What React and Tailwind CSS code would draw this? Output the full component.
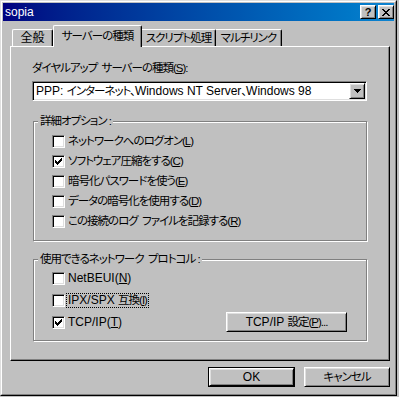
import React from "react";

const raised =
  "border border-t-white border-l-white border-r-black border-b-black shadow-[inset_1px_1px_#dfdfdf,inset_-1px_-1px_#808080]";
const sunken =
  "border border-t-[#808080] border-l-[#808080] border-r-white border-b-white shadow-[inset_1px_1px_#000,inset_-1px_-1px_#dfdfdf]";

function J({ children }) {
  return <span className="text-[11.5px] tracking-[-1px]">{children}</span>;
}

function CheckMark() {
  const px = [
    [6, 0, 1], [5, 1, 2], [0, 2, 1], [4, 2, 3], [0, 3, 2], [3, 3, 3], [0, 4, 5], [1, 5, 3], [2, 6, 1],
  ];
  return (
    <svg width="7" height="7" viewBox="0 0 7 7" shapeRendering="crispEdges">
      {px.map(([x, y, w], i) => (
        <rect key={i} x={x} y={y} width={w} height={1} fill="#000" />
      ))}
    </svg>
  );
}

function Box({ checked }) {
  return (
    <span className={`w-[13px] h-[13px] shrink-0 bg-white flex items-center justify-center ${sunken}`}>
      {checked && <CheckMark />}
    </span>
  );
}

function Row({ checked, children, h = "h-[20px]", focus = false, right = null }) {
  return (
    <div className={`${h} flex items-center`}>
      <Box checked={checked} />
      <span
        className={`ml-[2px] leading-[13px] px-px whitespace-pre ${
          focus ? "outline outline-1 outline-dotted outline-black" : ""
        }`}
      >
        {children}
      </span>
      {right}
    </div>
  );
}

function Group({ title, className = "", children }) {
  return (
    <fieldset
      className={`ml-px w-[334px] border border-[#808080] shadow-[inset_1px_1px_#fff,1px_1px_#fff] ${className}`}
    >
      <legend className="ml-[4px] px-[2px] leading-[14px] bg-[#c0c0c0] whitespace-pre">
        <J>{title}</J>
      </legend>
      {children}
    </fieldset>
  );
}

const tabBase = "flex items-center justify-center leading-[14px] whitespace-nowrap";

export default function App() {
  return (
    <div className="w-[399px] h-[397px] bg-[#c0c0c0] text-black text-[12px] font-['Liberation_Sans','Noto_Sans_CJK_JP',sans-serif] [font-feature-settings:'palt']">
      <div className="w-[397px] h-[396px] border border-t-[#dfdfdf] border-l-[#dfdfdf] border-r-black border-b-black">
        <div className="w-full h-full border border-t-white border-l-white border-r-[#808080] border-b-[#808080] p-px flex flex-col">
          {/* Title bar */}
          <div className="h-[18px] shrink-0 flex items-center bg-gradient-to-r from-[#000080] to-[#1084d0] pl-[2px] gap-[2px]">
            <span className="flex-1 text-white text-[12px] leading-[14px]">sopia</span>
            <div className={`w-[16px] h-[14px] flex items-center justify-center bg-[#c0c0c0] ${raised}`}>
              <span className="font-bold text-[11px] leading-[10px]">?</span>
            </div>
            <div className={`w-[16px] h-[14px] flex items-center justify-center bg-[#c0c0c0] ${raised}`}>
              <svg width="8" height="7" viewBox="0 0 8 7" shapeRendering="crispEdges">
                <path
                  d="M0 0h2v1h-2zM6 0h2v1h-2zM1 1h2v1h-2zM5 1h2v1h-2zM2 2h4v1h-4zM3 3h2v1h-2zM2 4h4v1h-4zM1 5h2v1h-2zM5 5h2v1h-2zM0 6h2v1h-2zM6 6h2v1h-2z"
                  fill="#000"
                />
              </svg>
            </div>
          </div>

          {/* Tabs */}
          <div className="mt-[4px] h-[21px] shrink-0 flex items-end pl-[9px]">
            <div className={`w-[41px] h-[17px] border-t border-l border-white border-r border-r-black rounded-tl-[2px] rounded-tr-[2px] shadow-[inset_-1px_0_#808080] ${tabBase}`}>
              <span className="text-[12px]">全般</span>
            </div>
            <div className={`relative w-[89px] h-[22px] -mb-px pb-[1px] bg-[#c0c0c0] border-t border-l border-white border-r border-r-black rounded-tl-[2px] rounded-tr-[2px] shadow-[inset_-1px_0_#808080] ${tabBase}`}>
              <J>サーバーの種類</J>
            </div>
            <div className={`w-[74px] h-[17px] border-t border-white border-r border-r-black rounded-tr-[2px] shadow-[inset_-1px_0_#808080] ${tabBase}`}>
              <J>スクリプト処理</J>
            </div>
            <div className={`w-[66px] h-[17px] border-t border-white border-r border-r-black rounded-tr-[2px] shadow-[inset_-1px_0_#808080] ${tabBase}`}>
              <J>マルチリンク</J>
            </div>
          </div>

          {/* Panel */}
          <div className="ml-[7px] w-[380px] h-[315px] shrink-0 border border-t-white border-l-white border-r-black border-b-black shadow-[inset_-1px_-1px_#808080] pl-[21px] pt-[14px] flex flex-col">
            <div className="leading-[14px] whitespace-pre">
              <J>
                ダイヤルアップ  サーバーの種類(<u>S</u>):
              </J>
            </div>
            <div className={`mt-[6px] w-[335px] h-[20px] flex bg-white p-px ${sunken}`}>
              <div className="flex-1 flex items-center pl-[2px] leading-[14px] whitespace-nowrap">
                <span>
                  PPP: <J>インターネット、</J>Windows NT Server<J>、</J>Windows 98
                </span>
              </div>
              <div className={`w-[16px] h-[16px] flex items-center justify-center bg-[#c0c0c0] ${raised}`}>
                <svg width="7" height="4" viewBox="0 0 7 4" shapeRendering="crispEdges">
                  <path d="M0 0h7v1h-7zM1 1h5v1h-5zM2 2h3v1h-3zM3 3h1v1h-1z" fill="#000" />
                </svg>
              </div>
            </div>

            <Group title="詳細オプション :" className="mt-[13px]">
              <div className="pl-[18px] pt-[3px] pb-[9px] flex flex-col">
                <Row>
                  <J>ネットワークへのログオン(<u>L</u>)</J>
                </Row>
                <Row checked>
                  <J>ソフトウェア圧縮をする(<u>C</u>)</J>
                </Row>
                <Row>
                  <J>暗号化パスワードを使う(<u>E</u>)</J>
                </Row>
                <Row>
                  <J>データの暗号化を使用する(<u>D</u>)</J>
                </Row>
                <Row>
                  <J>この接続のログ  ファイルを記録する(<u>R</u>)</J>
                </Row>
              </div>
            </Group>

            <Group title="使用できるネットワーク  プロトコル :" className="mt-[11px]">
              <div className="pl-[18px] pr-[19px] pt-[1px] pb-[7px] flex flex-col">
                <Row h="h-[22px]">NetBEUI(<u>N</u>)</Row>
                <Row h="h-[22px]" focus>
                  IPX/SPX <J>互換(<u>I</u>)</J>
                </Row>
                <Row
                  h="h-[22px]"
                  checked
                  right={
                    <div className={`ml-auto w-[121px] h-[20px] flex items-center justify-center leading-[14px] whitespace-nowrap ${raised}`}>
                      <span>
                        TCP/IP <J>設定(<u>P</u>)...</J>
                      </span>
                    </div>
                  }
                >
                  TCP/IP(<u>T</u>)
                </Row>
              </div>
            </Group>
          </div>

          {/* Bottom buttons */}
          <div className="mt-[6px] flex justify-end gap-[9px] pr-[4px]">
            <div className="w-[87px] h-[20px] border border-black">
              <div className={`w-full h-full flex items-center justify-center leading-[14px] ${raised}`}>OK</div>
            </div>
            <div className={`w-[86px] h-[20px] flex items-center justify-center leading-[14px] ${raised}`}>
              <J>キャンセル</J>
            </div>
          </div>
        </div>
      </div>
    </div>
  );
}
